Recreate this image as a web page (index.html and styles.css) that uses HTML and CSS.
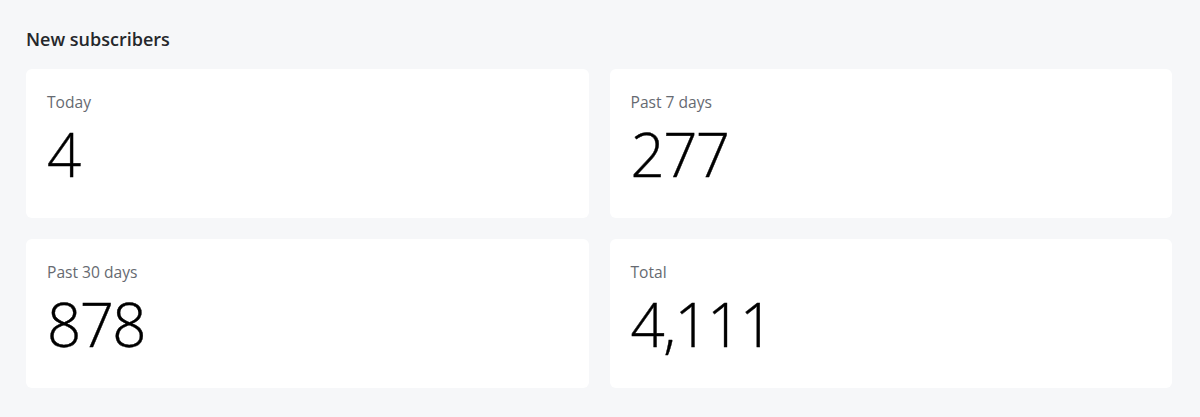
FILE: index.html
```html
<!DOCTYPE html>
<html>
<head>
<meta charset="utf-8">
<link rel="stylesheet" href="styles.css">
</head>
<body>
<div class="page">
  <h2 class="title">New subscribers</h2>
  <div class="grid">
    <div class="card">
      <div class="label">Today</div>
      <div class="value">4</div>
    </div>
    <div class="card">
      <div class="label">Past 7 days</div>
      <div class="value">277</div>
    </div>
    <div class="card">
      <div class="label">Past 30 days</div>
      <div class="value">878</div>
    </div>
    <div class="card">
      <div class="label">Total</div>
      <div class="value">4,111</div>
    </div>
  </div>
</div>
</body>
</html>
```
FILE: styles.css
```css
html, body {
  margin: 0;
  padding: 0;
  background: #f6f7f9;
}
body {
  font-family: "Open Sans", "Noto Sans", sans-serif;
  color: #1f2124;
}
.page {
  padding: 27px 28px 29px 26px;
}
.title {
  margin: 0 0 18px 0;
  font-size: 18px;
  line-height: 24px;
  font-weight: 600;
  color: #25272b;
}
.grid {
  display: grid;
  grid-template-columns: 1fr 1fr;
  gap: 21px;
}
.card {
  background: #ffffff;
  border-radius: 6px;
  padding: 23px 21px 34px 21px;
}
.label {
  font-size: 15.6px;
  line-height: 20px;
  color: #666a71;
}
.value {
  margin-top: 12px;
  font-size: 60px;
  line-height: 60px;
  font-weight: 300;
  letter-spacing: -1.6px;
  color: #000000;
  -webkit-text-stroke: 0.4px #000000;
}
```
